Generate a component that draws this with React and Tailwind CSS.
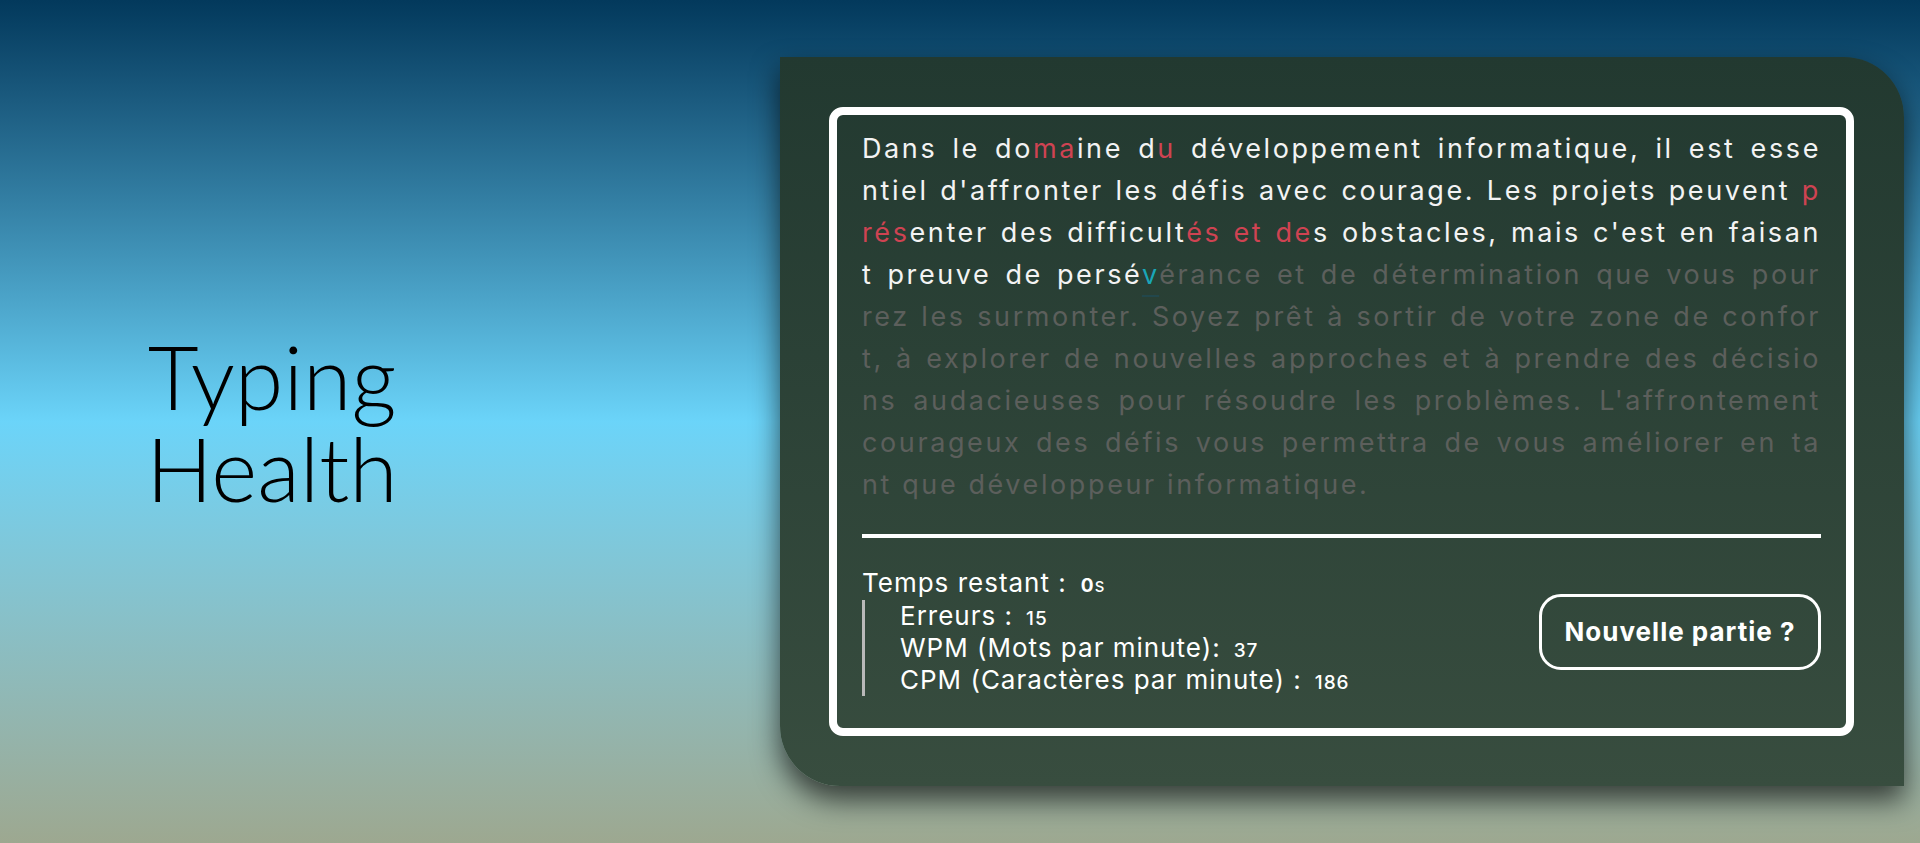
const OK = 'text-[#f3f3f3]';
const ERR = 'text-[#cf4352]';
const TODO = 'text-[#5c5f5c]';

const lines = [
  [['Dans le do', OK], ['ma', ERR], ['ine d', OK], ['u', ERR], [' développement informatique, il est esse', OK]],
  [["ntiel d'affronter les défis avec courage. Les projets peuvent ", OK], ['p', ERR]],
  [['rés', ERR], ['enter des difficult', OK], ['és et de', ERR], ["s obstacles, mais c'est en faisan", OK]],
  [['t preuve de persé', OK], ['v', 'cur'], ['érance et de détermination que vous pour', TODO]],
  [['rez les surmonter. Soyez prêt à sortir de votre zone de confor', TODO]],
  [['t, à explorer de nouvelles approches et à prendre des décisio', TODO]],
  [["ns audacieuses pour résoudre les problèmes. L'affrontement", TODO]],
  [['courageux des défis vous permettra de vous améliorer en ta', TODO]],
  [['nt que développeur informatique.', TODO]],
];

function Stat({ label, value }) {
  return (
    <li className="flex items-baseline h-[32px]">
      <span>{label}</span>
      <span className="ml-[13px] text-[19px] font-medium">{value}</span>
    </li>
  );
}

export default function App() {
  return (
    <div className="h-[843px] w-full overflow-hidden bg-gradient-to-b from-[#03395c] via-[#6bd4f9] to-[#9da890] flex items-center font-['Inter',sans-serif]">
      <div className="w-[544px] shrink-0 flex justify-center">
        <h1 className="text-center text-[88px] leading-[92px] font-light text-black font-['Lato',sans-serif]">
          Typing
          <br />
          Health
        </h1>
      </div>

      <div className="ml-[236px] w-[1124px] h-[729px] shrink-0 p-[50px] pl-[49px] rounded-tr-[60px] rounded-bl-[60px] bg-gradient-to-b from-[#223930] to-[#384d3f] shadow-[0_14px_28px_rgba(0,0,0,0.65)]">
        <div className="h-full border-8 border-white rounded-[14px] px-[25px] pt-[13px] flex flex-col">
          <div className="text-[27px] leading-[42px] tracking-[2.6px] whitespace-nowrap">
            {lines.map((line, i) => (
              <div key={i} className={i < lines.length - 1 ? 'text-justify [text-align-last:justify]' : ''}>
                {line.map(([txt, cls], j) =>
                  cls === 'cur' ? (
                    <span key={j} className="text-[#1aa6b8] underline decoration-[#22474c] decoration-2 underline-offset-[11px]">
                      {txt}
                    </span>
                  ) : (
                    <span key={j} className={cls}>{txt}</span>
                  )
                )}
              </div>
            ))}
          </div>

          <div className="mt-[28px] h-[4px] bg-white" />

          <div className="mt-[29px] flex items-center justify-between text-white text-[26px] leading-[32px] tracking-[1px]">
            <div>
              <p className="flex items-baseline h-[33px]">
                <span>Temps restant :</span>
                <span className="ml-[14px] text-[19px] font-bold">0</span>
                <span className="text-[19px]">s</span>
              </p>
              <ul className="border-l-[3px] border-[#b9b9b9] pl-[35px]">
                <Stat label="Erreurs :" value="15" />
                <Stat label="WPM (Mots par minute):" value="37" />
                <Stat label="CPM (Caractères par minute) :" value="186" />
              </ul>
            </div>
            <button className="w-[282px] h-[76px] border-[3px] border-white rounded-[22px] text-[26px] font-bold tracking-[1px] text-white">
              Nouvelle partie ?
            </button>
          </div>
        </div>
      </div>
    </div>
  );
}
